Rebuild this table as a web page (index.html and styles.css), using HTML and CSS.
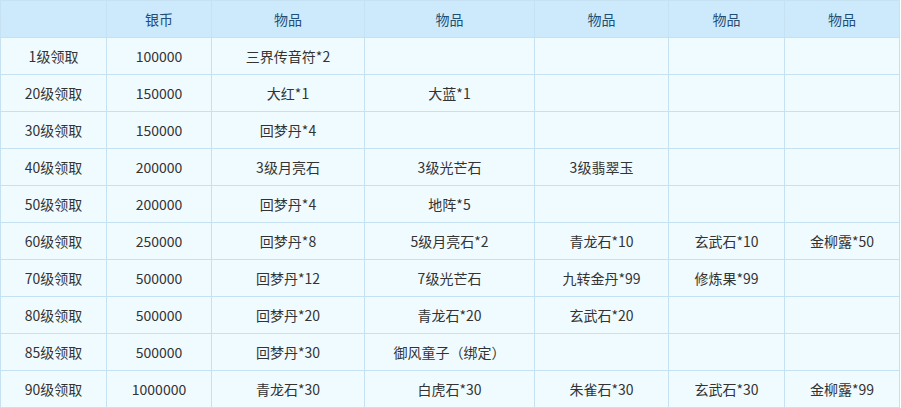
FILE: index.html
```html
<!DOCTYPE html>
<html>
<head>
<meta charset="utf-8">
<link rel="stylesheet" href="styles.css">
</head>
<body>
<table class="rewards">
<colgroup>
<col class="c1"><col class="c2"><col class="c3"><col class="c4"><col class="c5"><col class="c6"><col class="c7">
</colgroup>
<thead>
<tr><th></th><th>银币</th><th>物品</th><th>物品</th><th>物品</th><th>物品</th><th>物品</th></tr>
</thead>
<tbody>
<tr><td>1级领取</td><td>100000</td><td>三界传音符*2</td><td></td><td></td><td></td><td></td></tr>
<tr><td>20级领取</td><td>150000</td><td>大红*1</td><td>大蓝*1</td><td></td><td></td><td></td></tr>
<tr><td>30级领取</td><td>150000</td><td>回梦丹*4</td><td></td><td></td><td></td><td></td></tr>
<tr><td>40级领取</td><td>200000</td><td>3级月亮石</td><td>3级光芒石</td><td>3级翡翠玉</td><td></td><td></td></tr>
<tr><td>50级领取</td><td>200000</td><td>回梦丹*4</td><td>地阵*5</td><td></td><td></td><td></td></tr>
<tr><td>60级领取</td><td>250000</td><td>回梦丹*8</td><td>5级月亮石*2</td><td>青龙石*10</td><td>玄武石*10</td><td>金柳露*50</td></tr>
<tr><td>70级领取</td><td>500000</td><td>回梦丹*12</td><td>7级光芒石</td><td>九转金丹*99</td><td>修炼果*99</td><td></td></tr>
<tr><td>80级领取</td><td>500000</td><td>回梦丹*20</td><td>青龙石*20</td><td>玄武石*20</td><td></td><td></td></tr>
<tr><td>85级领取</td><td>500000</td><td>回梦丹*30</td><td>御风童子（绑定）</td><td></td><td></td><td></td></tr>
<tr><td>90级领取</td><td>1000000</td><td>青龙石*30</td><td>白虎石*30</td><td>朱雀石*30</td><td>玄武石*30</td><td>金柳露*99</td></tr>
</tbody>
</table>
</body>
</html>
```
FILE: styles.css
```css
html, body {
  margin: 0;
  padding: 0;
  background: #ffffff;
}
.rewards {
  width: 899px;
  border-collapse: collapse;
  table-layout: fixed;
  font-family: "Noto Sans CJK SC", "Noto Sans", sans-serif;
  font-size: 14px;
  color: #333333;
  background: #f0fbff;
}
.c1 { width: 106px; }
.c2 { width: 105px; }
.c3 { width: 153px; }
.c4 { width: 170px; }
.c5 { width: 134px; }
.c6 { width: 116px; }
.c7 { width: 115px; }
.rewards th,
.rewards td {
  height: 36px;
  padding: 0;
  border: 1px solid #c6e1f1;
  text-align: center;
  vertical-align: middle;
  white-space: nowrap;
  line-height: 16px;
}
.rewards th {
  background: #cdeafc;
  color: #1f4f74;
  font-weight: normal;
}
```
